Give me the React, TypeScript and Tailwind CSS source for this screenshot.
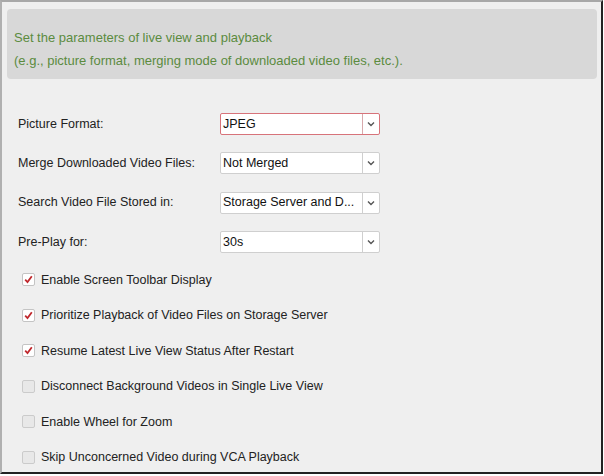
import React from 'react';

const selects = [
  { label: 'Picture Format:', value: 'JPEG', focused: true },
  { label: 'Merge Downloaded Video Files:', value: 'Not Merged' },
  { label: 'Search Video File Stored in:', value: 'Storage Server and D...' },
  { label: 'Pre-Play for:', value: '30s' },
];

const options = [
  { label: 'Enable Screen Toolbar Display', checked: true },
  { label: 'Prioritize Playback of Video Files on Storage Server', checked: true },
  { label: 'Resume Latest Live View Status After Restart', checked: true },
  { label: 'Disconnect Background Videos in Single Live View', checked: false },
  { label: 'Enable Wheel for Zoom', checked: false },
  { label: 'Skip Unconcerned Video during VCA Playback', checked: false },
];

const Chevron = () => (
  <svg width="8" height="6" viewBox="0 0 8 6" className="text-[#555]">
    <path d="M1 1.5 L4 4.5 L7 1.5" fill="none" stroke="currentColor" strokeWidth="1.4" />
  </svg>
);

const Checkbox = ({ checked }: { checked: boolean }) => (
  <span
    className={
      checked
        ? 'flex h-[13px] w-[13px] items-center justify-center rounded-[2px] border border-[#c4c4c4] bg-white'
        : 'flex h-[13px] w-[13px] items-center justify-center rounded-[2px] border border-[#cbcbcb] bg-[#e8e8e8]'
    }
  >
    {checked && (
      <svg width="9" height="9" viewBox="0 0 9 9">
        <path d="M1.2 4.6 L3.5 7 L7.8 1.3" fill="none" stroke="#c0282d" strokeWidth="1.8" />
      </svg>
    )}
  </span>
);

export default function App() {
  return (
    <div
      className="h-[476px] w-[604px] bg-white text-[12.5px] text-[#222]"
      style={{ fontFamily: '"Liberation Sans", Arial, sans-serif' }}
    >
      <div className="h-[474px] w-[603px] border-t-2 border-l-2 border-r-2 border-b-2 border-t-[#a8a8a8] border-l-[#b0b0b0] border-r-[#222] border-b-[#222] bg-[#efefef] pt-[7px] pl-[5px] pr-[4px]">
        {/* Info */}
        <div className="h-[70px] rounded-[4px] bg-[#d8d8d8] pl-[7px] pt-[17px] text-[13px] leading-[23px] text-[#5b8b3f]">
          <p>Set the parameters of live view and playback</p>
          <p>(e.g., picture format, merging mode of downloaded video files, etc.).</p>
        </div>

        {/* Selects */}
        <div className="mt-[34px] flex flex-col gap-[17.3px] pl-[11px]">
          {selects.map((s) => (
            <div key={s.label} className="flex h-[22px] items-center">
              <span className="w-[202px]">{s.label}</span>
              <div
                className={
                  s.focused
                    ? 'flex h-[22px] w-[160px] items-stretch rounded-[2px] border border-[#d7737a] bg-white'
                    : 'flex h-[22px] w-[160px] items-stretch rounded-[2px] border border-[#cfcfcf] bg-white'
                }
              >
                <span className="flex flex-1 items-center pl-[2px] text-[12.5px] text-[#111]">{s.value}</span>
                <span
                  className={
                    s.focused
                      ? 'flex w-[17px] items-center justify-center border-l border-[#d8a9ac]'
                      : 'flex w-[17px] items-center justify-center border-l border-[#cfcfcf]'
                  }
                >
                  <Chevron />
                </span>
              </div>
            </div>
          ))}
        </div>

        {/* Options */}
        <div className="mt-[16px] flex flex-col gap-[13.5px] pl-[15px]">
          {options.map((o) => (
            <label key={o.label} className="flex h-[22px] items-center gap-[6px]">
              <Checkbox checked={o.checked} />
              <span>{o.label}</span>
            </label>
          ))}
        </div>
      </div>
    </div>
  );
}
